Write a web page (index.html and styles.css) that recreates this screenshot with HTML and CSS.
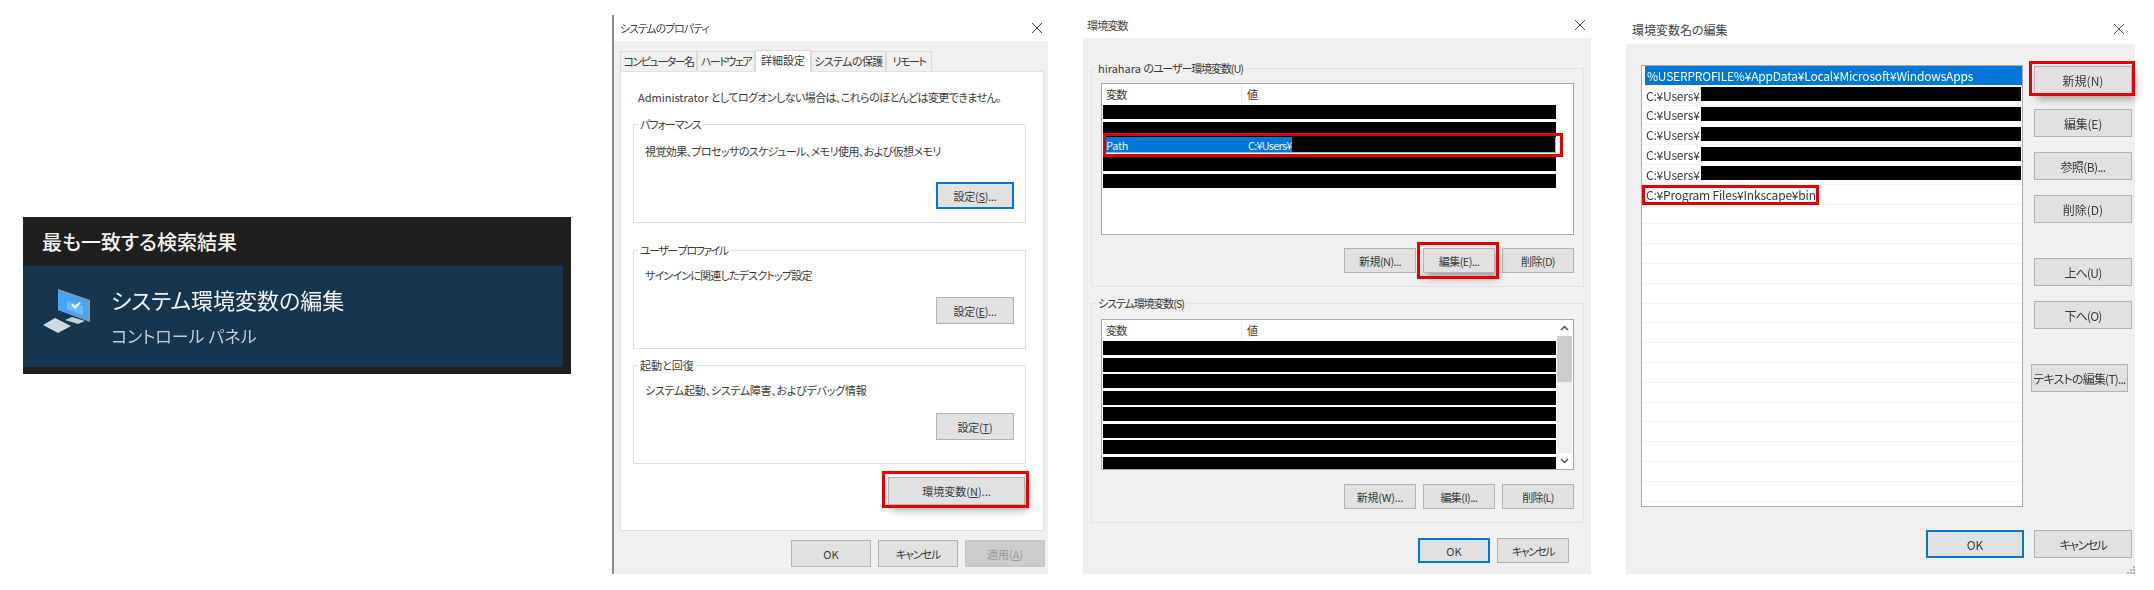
FILE: index.html
```html
<!DOCTYPE html>
<html lang="ja">
<head>
  <meta charset="UTF-8">
  <meta name="viewport" content="width=device-width, initial-scale=1.0">
  <title>環境変数の設定手順</title>
  <link rel="stylesheet" href="styles.css">
</head>
<body>
  <div class="sheet">

    <!-- search result -->
    <section class="search">
      <h2 class="search-head">最も一致する検索結果</h2>
      <div class="search-hit">
        <svg class="search-icon" width="50" height="47" viewBox="0 0 50 47">
          <polygon points="16,2 48,13 48,35 16,23" fill="#8d9aa6"/>
          <polygon points="16,4 46,14 46,33 16,23" fill="#45a5f5"/>
          <polygon points="25,14 41,19 41,28 25,22" fill="#6dbaf7"/>
          <polyline points="30,17.5 33,20.5 38,15.5" fill="none" stroke="#ffffff" stroke-width="2"/>
          <polygon points="23,33 30,30 43,34 36,37" fill="#c9ced2"/>
          <polygon points="1,38 13,31 29,39 16,46" fill="#d5d8da"/>
        </svg>
        <div>
          <div class="search-title">システム環境変数の編集</div>
          <div class="search-sub">コントロール パネル</div>
        </div>
      </div>
    </section>

    <!-- system properties -->
    <section class="dialog dialog-props">
      <header class="titlebar">
        <span class="tight-l">システムのプロパティ</span>
        <svg class="close" width="12" height="12" viewBox="0 0 12 12"><path d="M1 1L11 11M11 1L1 11"/></svg>
      </header>
      <div class="dialog-body">
        <div class="tabs">
          <div class="tab tab-name tight-xl">コンピューター名</div>
          <div class="tab tab-hw tight-xl">ハードウェア</div>
          <div class="tab tab-adv active">詳細設定</div>
          <div class="tab tab-prot tight-s">システムの保護</div>
          <div class="tab tab-remote tight-xl">リモート</div>
        </div>
        <div class="tab-panel">
          <p class="note">Administrator <span class="tight-s">としてログオンしない場合は、これらのほとんどは変更できません。</span></p>

          <fieldset class="group group-perf">
            <legend class="tight-l">パフォーマンス</legend>
            <p class="tight-s">視覚効果、プロセッサのスケジュール、メモリ使用、および仮想メモリ</p>
            <button class="btn btn-set focus tight-xs">設定(<u>S</u>)...</button>
          </fieldset>

          <fieldset class="group group-user">
            <legend class="tight-xl">ユーザー プロファイル</legend>
            <p class="tight-m">サインインに関連したデスクトップ設定</p>
            <button class="btn btn-set tight-xs">設定(<u>E</u>)...</button>
          </fieldset>

          <fieldset class="group group-boot">
            <legend>起動と回復</legend>
            <p class="tight-xs">システム起動、システム障害、およびデバッグ情報</p>
            <button class="btn btn-set tight-xs">設定(<u>T</u>)</button>
          </fieldset>

          <button class="btn btn-env marked">環境変数(<u>N</u>)...</button>
        </div>
        <div class="footer">
          <button class="btn btn-foot">OK</button>
          <button class="btn btn-foot tight-l">キャンセル</button>
          <button class="btn btn-foot disabled">適用(<u>A</u>)</button>
        </div>
      </div>
    </section>

    <!-- environment variables -->
    <section class="dialog dialog-env">
      <header class="titlebar">
        <span class="tight-m">環境変数</span>
        <svg class="close" width="12" height="12" viewBox="0 0 12 12"><path d="M1 1L11 11M11 1L1 11"/></svg>
      </header>
      <div class="dialog-body">
        <fieldset class="env-group env-user">
          <legend>hirahara <span class="tight-l">のユーザー環境変数(U)</span></legend>
          <div class="env-list">
            <div class="env-main">
              <div class="env-head"><span class="col-name tight-m">変数</span><span>値</span></div>
              <div class="env-rows">
                <div class="bar"></div>
                <div class="bar bar-joined"></div>
                <div class="path-row">
                  <span class="col-name tight-xs">Path</span>
                  <span class="col-value tight-m">C:¥Users¥</span>
                  <div class="bar"></div>
                </div>
                <div class="bar"></div>
                <div class="bar"></div>
              </div>
            </div>
          </div>
          <div class="env-btns">
            <button class="btn btn-env-row tight-s">新規(N)...</button>
            <button class="btn btn-env-row marked tight-s">編集(E)...</button>
            <button class="btn btn-env-row tight-s">削除(D)</button>
          </div>
        </fieldset>

        <fieldset class="env-group env-system">
          <legend class="tight-l">システム環境変数(S)</legend>
          <div class="env-list">
            <div class="env-main">
              <div class="env-head"><span class="col-name tight-m">変数</span><span>値</span></div>
              <div class="env-rows sys-rows">
                <div class="bar"></div>
                <div class="bar"></div>
                <div class="bar"></div>
                <div class="bar"></div>
                <div class="bar"></div>
                <div class="bar"></div>
                <div class="bar"></div>
                <div class="bar"></div>
              </div>
            </div>
            <div class="scrollbar">
              <svg class="arrow" width="15" height="16" viewBox="0 0 15 16"><path d="M4 10L7.500 6.500L11 10"/></svg>
              <div class="scroll-thumb"></div>
              <div class="scroll-track"></div>
              <svg class="arrow" width="15" height="16" viewBox="0 0 15 16"><path d="M4 6L7.500 9.500L11 6"/></svg>
            </div>
          </div>
          <div class="env-btns">
            <button class="btn btn-env-row tight-xs">新規(W)...</button>
            <button class="btn btn-env-row tight-s">編集(I)...</button>
            <button class="btn btn-env-row tight-m">削除(L)</button>
          </div>
        </fieldset>

        <div class="footer">
          <button class="btn btn-env-row focus">OK</button>
          <button class="btn btn-env-row tight-xl">キャンセル</button>
        </div>
      </div>
    </section>

    <!-- edit path -->
    <section class="dialog dialog-path">
      <header class="titlebar">
        <span>環境変数名の編集</span>
        <svg class="close" width="12" height="12" viewBox="0 0 12 12"><path d="M1 1L11 11M11 1L1 11"/></svg>
      </header>
      <div class="dialog-body">
        <div class="path-main">
          <div class="path-list">
            <div class="path-item selected">%USERPROFILE%¥AppData¥Local¥Microsoft¥WindowsApps</div>
            <div class="path-item"><span>C:¥Users¥</span><div class="bar"></div></div>
            <div class="path-item"><span>C:¥Users¥</span><div class="bar"></div></div>
            <div class="path-item"><span>C:¥Users¥</span><div class="bar"></div></div>
            <div class="path-item"><span>C:¥Users¥</span><div class="bar"></div></div>
            <div class="path-item"><span>C:¥Users¥</span><div class="bar"></div></div>
            <div class="path-item"><span class="marked">C:¥Program Files¥Inkscape¥bin</span></div>
            <div class="path-item"></div>
            <div class="path-item"></div>
            <div class="path-item"></div>
            <div class="path-item"></div>
            <div class="path-item"></div>
            <div class="path-item"></div>
            <div class="path-item"></div>
            <div class="path-item"></div>
            <div class="path-item"></div>
            <div class="path-item"></div>
            <div class="path-item"></div>
            <div class="path-item"></div>
            <div class="path-item"></div>
            <div class="path-item"></div>
            <div class="path-item"></div>
          </div>
          <div class="path-side">
            <button class="btn btn-side marked">新規(N)</button>
            <button class="btn btn-side tight-xs">編集(E)</button>
            <button class="btn btn-side tight-s">参照(B)...</button>
            <button class="btn btn-side">削除(D)</button>
            <button class="btn btn-side side-break tight-m">上へ(U)</button>
            <button class="btn btn-side tight-m">下へ(O)</button>
            <button class="btn btn-side btn-text side-break tight-m">テキストの編集(T)...</button>
          </div>
        </div>
        <div class="footer">
          <button class="btn btn-side focus">OK</button>
          <button class="btn btn-side tight-xl">キャンセル</button>
        </div>
        <svg class="grip" width="8" height="8" viewBox="0 0 8 8"><path d="M6 0h2v2H6zM3 3h2v2H3zM6 3h2v2H6zM0 6h2v2H0zM3 6h2v2H3zM6 6h2v2H6z"/></svg>
      </div>
    </section>

  </div>
</body>
</html>
```

FILE: styles.css
```css
* {
  box-sizing: border-box;
}

body {
  margin: 0;
  background: #ffffff;
  color: #3a3a3a;
  font-family: "Noto Sans CJK JP", sans-serif;
  font-size: 12px;
  font-feature-settings: "palt";
}

p {
  margin: 0;
}

/* the dialogs use a narrower kana than Noto has */
.tight-xs {
  letter-spacing: -0.25px;
}

.tight-s {
  letter-spacing: -0.6px;
}

.tight-m {
  letter-spacing: -0.8px;
}

.tight-l {
  letter-spacing: -1.1px;
}

.tight-xl {
  letter-spacing: -1.5px;
}

/* the source picture is an upscaled capture, slightly soft */
.sheet {
  display: flex;
  align-items: flex-start;
  width: 2154px;
  height: 590px;
  overflow: hidden;
  filter: blur(0.3px);
}

/* search result */
.search {
  width: 548px;
  height: 157px;
  margin: 217px 0 0 23px;
  background: #1f1f1f;
}

.search-head {
  height: 49px;
  margin: 0;
  padding-left: 19px;
  color: #f2f2f2;
  font-size: 20px;
  font-weight: 500;
  line-height: 49px;
}

.search-hit {
  display: flex;
  width: 540px;
  height: 101px;
  padding-top: 21px;
  background: #16354f;
}

.search-icon {
  margin-left: 19px;
  margin-right: 19px;
  flex: none;
}

.search-title {
  color: #f0f2f4;
  font-size: 22px;
  line-height: 24px;
}

.search-sub {
  margin-top: 13px;
  color: #c4ccd4;
  font-size: 17px;
  line-height: 24px;
}

/* dialogs */
.dialog {
  display: flex;
  flex-direction: column;
  flex: none;
}

.titlebar {
  display: flex;
  align-items: center;
  justify-content: space-between;
  background: #ffffff;
  color: #444444;
}

.close path {
  fill: none;
  stroke: #4a4a4a;
  stroke-width: 1;
}

.dialog-body {
  position: relative;
  flex: 1;
  background: #f0f0f0;
}

.footer {
  display: flex;
  justify-content: flex-end;
}

.btn {
  display: flex;
  align-items: center;
  justify-content: center;
  padding: 0;
  background: #e1e1e1;
  border: 1px solid #b4b4b4;
  color: #3a3a3a;
  font-family: inherit;
  font-size: inherit;
  font-feature-settings: inherit;
  white-space: pre;
}

.btn.focus {
  border: 2px solid #0078d7;
}

.btn.disabled {
  background: #cccccc;
  border-color: #c4c4c4;
  color: #9a9a9a;
}

.marked {
  position: relative;
}

.btn.marked {
  box-shadow: 3px 5px 8px rgba(0, 0, 0, 0.35);
}

.marked::after {
  content: "";
  position: absolute;
  border: 3px solid #e60000;
}

.bar {
  height: 14px;
  background: #000000;
}

/* system properties */
.dialog-props {
  width: 436px;
  height: 559px;
  margin: 15px 0 0 41px;
  border-left: 2px solid #8a8a8a;
  font-size: 11px;
}

.dialog-props .titlebar {
  height: 26px;
  padding: 0 5px 0 6px;
}

.dialog-props .dialog-body {
  padding: 9px 4px 0 6px;
}

.tabs {
  display: flex;
  align-items: flex-end;
  height: 21px;
}

.tab {
  height: 20px;
  border: 1px solid #d9d9d9;
  border-bottom: 0;
  background: #f0f0f0;
  text-align: center;
  line-height: 18px;
  white-space: nowrap;
}

.tab.active {
  position: relative;
  height: 22px;
  margin-bottom: -1px;
  background: #ffffff;
}

.tab-name {
  width: 77px;
}

.tab-hw {
  width: 58px;
}

.tab-adv {
  width: 56px;
}

.tab-prot {
  width: 75px;
}

.tab-remote {
  width: 46px;
}

.tab-panel {
  display: flex;
  flex-direction: column;
  width: 424px;
  height: 460px;
  padding: 16px 17px 0 12px;
  background: #ffffff;
  border: 1px solid #e1e1e1;
}

.note {
  margin-left: 5px;
  line-height: 18px;
  white-space: nowrap;
}

.group {
  flex: none;
  height: 107px;
  margin: 0;
  padding: 0 11px;
  border: 1px solid #dfdfdf;
}

.group legend {
  margin-left: -7px;
  padding: 0 2px;
  line-height: 16px;
}

.group p {
  margin-top: 8px;
  line-height: 18px;
  white-space: nowrap;
}

.group-perf {
  margin-top: 10px;
}

.group-perf p {
  margin-top: 10px;
}

.group-user {
  margin-top: 19px;
}

.group-boot {
  margin-top: 8px;
}

.btn-set {
  width: 78px;
  height: 27px;
  margin-left: auto;
}

.group-perf .btn-set {
  margin-top: 22px;
}

.group-user .btn-set {
  margin-top: 13px;
}

.group-boot .btn-set {
  margin-top: 14px;
}

.btn-env {
  align-self: flex-end;
  width: 137px;
  height: 28px;
  margin-top: 13px;
  margin-right: 1px;
}

.btn-env::after {
  inset: -7px -5px -4px -7px;
}

.dialog-props .footer {
  gap: 7px;
  margin-top: 9px;
  margin-right: -1px;
}

.btn-foot {
  width: 80px;
  height: 27px;
}

/* environment variables */
.dialog-env {
  width: 508px;
  height: 562px;
  margin: 12px 0 0 35px;
  font-size: 11px;
}

.dialog-env .titlebar {
  height: 26px;
  padding: 0 5px 0 4px;
}

.dialog-env .dialog-body {
  padding: 22px 7px 0 8px;
}

.env-group {
  margin: 0;
  padding: 0 9px;
  border: 1px solid #e3e3e3;
}

.env-group legend {
  margin-left: -5px;
  padding: 0 2px;
  line-height: 16px;
}

.env-user {
  height: 227px;
}

.env-system {
  height: 228px;
  margin-top: 8px;
}

.env-list {
  display: flex;
  justify-content: space-between;
  background: #ffffff;
  border: 1px solid #a9a9a9;
}

.env-user .env-list {
  height: 152px;
  margin-top: 7px;
}

.env-system .env-list {
  height: 151px;
  margin-top: 8px;
}

.env-main {
  width: 455px;
}

.env-head {
  display: flex;
  height: 21px;
  line-height: 20px;
}

.col-name {
  width: 140px;
  padding-left: 4px;
  border-right: 1px solid #eeeeee;
  margin-right: 5px;
  flex: none;
}

.env-rows {
  display: flex;
  flex-direction: column;
  gap: 3px;
  padding-left: 1px;
  width: 454px;
}

.env-rows .bar {
  flex: none;
}

.bar-joined {
  height: 15px;
  margin-bottom: -3px;
}

.path-row {
  position: relative;
  display: flex;
  align-items: stretch;
  height: 16px;
  margin-bottom: 1px;
  background: #0078d7;
  color: #e8f2fb;
  line-height: 16px;
  border-right: 1px solid #9ab6d3;
  border-bottom: 1px solid #9ab6d3;
}

.path-row::after {
  content: "";
  position: absolute;
  inset: -4px -8px -5px 0;
  border: 3px solid #e60000;
}

.path-row .col-name {
  border-right: 0;
  padding-left: 3px;
}

.path-row .col-value {
  width: 44px;
  flex: none;
  white-space: nowrap;
}

.path-row .bar {
  flex: 1;
  height: 15px;
}

.sys-rows {
  gap: 2.500px;
  height: 128px;
  overflow: hidden;
}

.scrollbar {
  display: flex;
  flex-direction: column;
  width: 15px;
  margin-right: 1px;
}

.arrow {
  flex: none;
}

.arrow path {
  fill: none;
  stroke: #505050;
  stroke-width: 1.500;
}

.scroll-thumb {
  height: 46px;
  background: #cdcdcd;
}

.scroll-track {
  flex: 1;
  background: #f0f0f0;
}

.env-btns {
  display: flex;
  justify-content: flex-end;
  gap: 7px;
}

.env-user .env-btns {
  margin-top: 13px;
}

.env-system .env-btns {
  margin-top: 14px;
}

.btn-env-row {
  width: 72px;
  height: 25px;
}

.env-btns .marked::after {
  inset: -7px -5px -7px -7px;
}

.dialog-env .footer {
  gap: 7px;
  margin-top: 15px;
  margin-right: 15px;
}

/* edit path */
.dialog-path {
  width: 509px;
  height: 560px;
  margin: 14px 0 0 35px;
}

.dialog-path .titlebar {
  height: 30px;
  padding: 0 10px 0 6px;
}

.dialog-path .dialog-body {
  padding: 21px 3px 0 15px;
}

.path-main {
  display: flex;
  gap: 11px;
}

.path-list {
  width: 382px;
  height: 442px;
  background: #ffffff;
  border: 1px solid #ababab;
  overflow: hidden;
}

.path-item {
  display: flex;
  align-items: center;
  height: 19.800px;
  padding-left: 4px;
  border-bottom: 1px solid #f4f4f4;
  letter-spacing: -0.2px;
  white-space: nowrap;
}

.path-item .bar {
  flex: 1;
  margin: -2px 1px 0 0;
}

.path-item span {
  width: 55px;
  flex: none;
}

.path-item .marked {
  width: auto;
}

.path-item .marked::after {
  inset: -1px -3px -2px -4px;
}

.path-item.selected {
  margin-left: 3px;
  padding-left: 2px;
  background: #0078d7;
  color: #ffffff;
}

.path-side {
  display: flex;
  flex-direction: column;
  gap: 15px;
  padding-top: 1px;
}

.btn-side {
  width: 98px;
  height: 28px;
}

.path-side .marked::after {
  inset: -6px -4px -3px -6px;
}

.side-break {
  margin-top: 20px;
}

.btn-text {
  width: 97px;
  margin-left: -3px;
}

.dialog-path .footer {
  gap: 10px;
  margin-top: 23px;
}

.grip {
  position: absolute;
  right: 0;
  bottom: 0;
  fill: #b8b8b8;
}
```
